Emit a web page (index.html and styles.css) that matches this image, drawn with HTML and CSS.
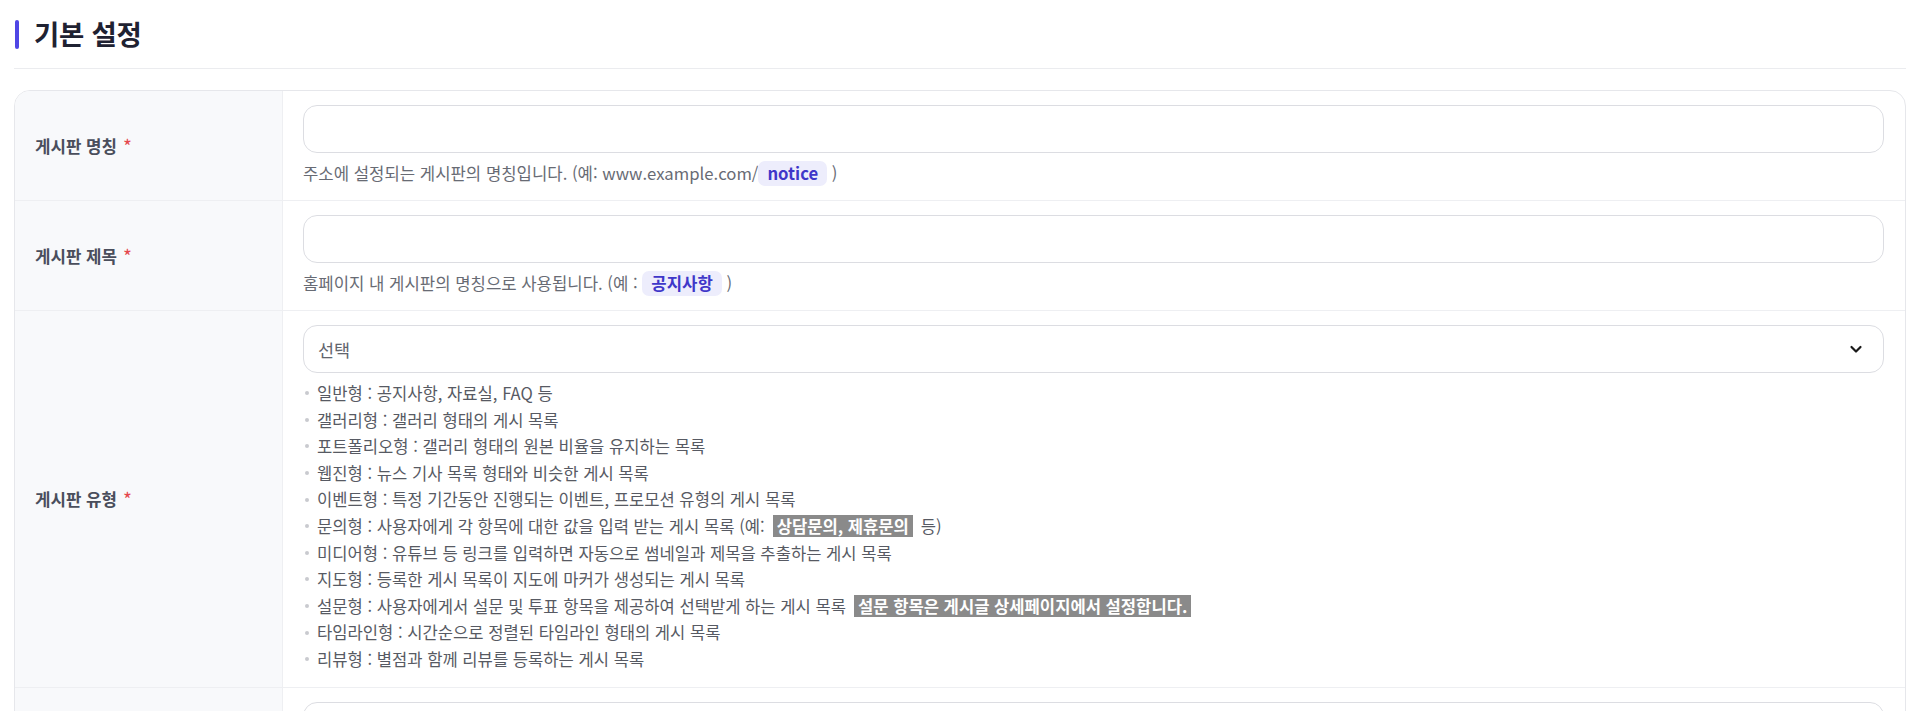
FILE: index.html
```html
<!DOCTYPE html>
<html lang="ko">
<head>
<meta charset="utf-8">
<title>기본 설정</title>
<link rel="stylesheet" href="styles.css">
</head>
<body>
<div class="page">
  <div class="section-head">
    <span class="accent"></span>
    <h2 class="section-title">기본 설정</h2>
  </div>

  <div class="form-card">
    <div class="form-row">
      <div class="form-label">게시판 명칭 <span class="req">*</span></div>
      <div class="form-field">
        <input class="text-input" type="text">
        <p class="help">주소에 설정되는 게시판의 명칭입니다. (예: www.example.com/<span class="chip">notice</span> )</p>
      </div>
    </div>

    <div class="form-row">
      <div class="form-label">게시판 제목 <span class="req">*</span></div>
      <div class="form-field">
        <input class="text-input" type="text">
        <p class="help">홈페이지 내 게시판의 명칭으로 사용됩니다. (예 : <span class="chip">공지사항</span> )</p>
      </div>
    </div>

    <div class="form-row">
      <div class="form-label">게시판 유형 <span class="req">*</span></div>
      <div class="form-field">
        <div class="select">
          <span class="select-text">선택</span>
          <svg class="chevron" width="14" height="14" viewBox="0 0 14 14"><path d="M2.5 5 L7 9.5 L11.5 5" fill="none" stroke="#1a1a1a" stroke-width="2.2" stroke-linecap="round" stroke-linejoin="round"/></svg>
        </div>
        <ul class="type-list">
          <li>일반형 : 공지사항, 자료실, FAQ 등</li>
          <li>갤러리형 : 갤러리 형태의 게시 목록</li>
          <li>포트폴리오형 : 갤러리 형태의 원본 비율을 유지하는 목록</li>
          <li>웹진형 : 뉴스 기사 목록 형태와 비슷한 게시 목록</li>
          <li>이벤트형 : 특정 기간동안 진행되는 이벤트, 프로모션 유형의 게시 목록</li>
          <li>문의형 : 사용자에게 각 항목에 대한 값을 입력 받는 게시 목록 (예: <span class="mark">상담문의, 제휴문의</span> 등)</li>
          <li>미디어형 : 유튜브 등 링크를 입력하면 자동으로 썸네일과 제목을 추출하는 게시 목록</li>
          <li>지도형 : 등록한 게시 목록이 지도에 마커가 생성되는 게시 목록</li>
          <li>설문형 : 사용자에게서 설문 및 투표 항목을 제공하여 선택받게 하는 게시 목록 <span class="mark">설문 항목은 게시글 상세페이지에서 설정합니다.</span></li>
          <li>타임라인형 : 시간순으로 정렬된 타임라인 형태의 게시 목록</li>
          <li>리뷰형 : 별점과 함께 리뷰를 등록하는 게시 목록</li>
        </ul>
      </div>
    </div>

    <div class="form-row">
      <div class="form-label"></div>
      <div class="form-field">
        <input class="text-input" type="text">
      </div>
    </div>
  </div>
</div>
</body>
</html>
```

FILE: styles.css
```css
* { box-sizing: border-box; }

html, body {
  margin: 0;
  padding: 0;
  background: #ffffff;
}

body {
  font-family: "Noto Sans CJK KR", "Noto Sans", sans-serif;
  color: #333640;
}

.page {
  padding: 0 14px 40px 14px;
}

.section-head {
  display: flex;
  align-items: center;
  gap: 15px;
  height: 69px;
  padding: 0 0 0 1px;
  border-bottom: 1px solid #ebecef;
}

.accent {
  width: 4px;
  height: 29px;
  border-radius: 2px;
  background: #4f46e5;
}

.section-title {
  margin: 0;
  font-size: 27.5px;
  font-weight: 700;
  color: #1f2232;
  letter-spacing: -0.3px;
  line-height: 1;
}

.form-card {
  margin-top: 21px;
  border: 1px solid #e6e7eb;
  border-radius: 16px;
  overflow: hidden;
}

.form-row {
  display: grid;
  grid-template-columns: 268px 1fr;
  border-bottom: 1px solid #eeeff2;
}

.form-label {
  display: flex;
  align-items: center;
  padding: 0 20px;
  background: #f8f9fb;
  border-right: 1px solid #eeeff2;
  font-size: 16.8px;
  font-weight: 600;
  color: #4a4e5c;
}

.req {
  color: #e5484d;
  margin-left: 6px;
  font-size: 19px;
  font-weight: 400;
}

.form-field {
  padding: 14px 21px 14px 20px;
}

.text-input {
  display: block;
  width: 100%;
  height: 48px;
  border: 1px solid #dcdde2;
  border-radius: 14px;
  background: #ffffff;
  padding: 0 14px;
  font: inherit;
  outline: none;
}

.help {
  margin: 7px 0 0 0;
  font-size: 16.7px;
  line-height: 26px;
  color: #686b74;
}

.chip {
  display: inline-block;
  padding: 0 9px;
  line-height: 25px;
  border-radius: 7px;
  background: #ededfc;
  color: #3f37c9;
  font-weight: 700;
}

.select {
  display: flex;
  align-items: center;
  justify-content: space-between;
  height: 48px;
  border: 1px solid #dcdde2;
  border-radius: 14px;
  padding: 0 20px 0 14px;
  background: #ffffff;
}

.select-text {
  font-size: 17.5px;
  color: #62656d;
}

.chevron {
  display: block;
}

.type-list {
  list-style: none;
  margin: 7px 0 0 0;
  padding: 0 0 0 2px;
  font-size: 16.6px;
  line-height: 26.6px;
  color: #575a63;
}

.type-list li {
  display: flex;
  align-items: center;
  gap: 8px;
  white-space: nowrap;
}

.type-list li::before {
  content: "";
  flex: none;
  width: 4px;
  height: 4px;
  border-radius: 50%;
  background: #c9cacf;
}

.mark {
  display: inline-block;
  padding: 0 4px;
  line-height: 22px;
  background: #8a8a8a;
  color: #ffffff;
  font-weight: 700;
}
```
